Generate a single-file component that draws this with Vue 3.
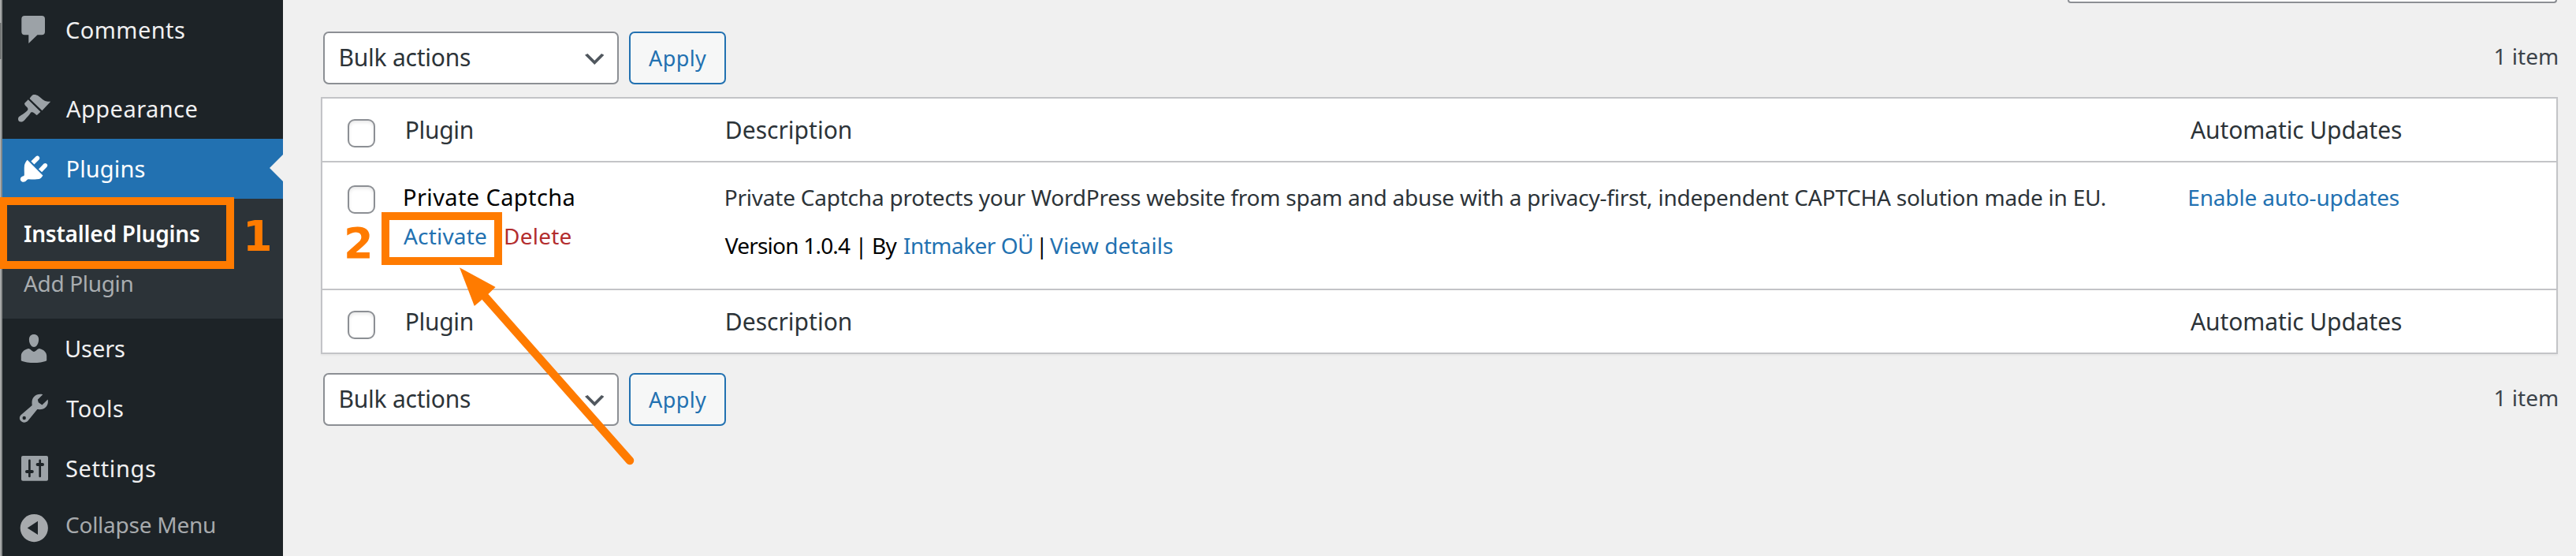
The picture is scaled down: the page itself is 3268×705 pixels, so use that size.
<script setup>
// Spaces a label's letters so that its drawn width equals the given number of pixels.
const ctx = document.createElement('canvas').getContext('2d')
const vFit = {
  mounted(el, { value }) {
    const cs = getComputedStyle(el)
    const text = el.textContent.trim()
    ctx.font = `${cs.fontWeight} ${cs.fontSize} ${cs.fontFamily}`
    const m = ctx.measureText(text)
    const ink = m.actualBoundingBoxLeft + m.actualBoundingBoxRight
    el.style.letterSpacing = `${(value - ink) / (text.length - 1)}px`
    el.style.textIndent = `${m.actualBoundingBoxLeft}px`
    el.style.width = `${value}px`
  },
}
const columns = [
  { label: 'Plugin', width: 84 },
  { label: 'Description', width: 158 },
  { label: 'Automatic Updates', width: 268 },
]
</script>

<template>
  <div class="screen">
    <div class="edge"><div class="edge-thumb"></div></div>
    <nav class="sidebar">
      <a class="item">
        <svg class="icon" viewBox="0 0 42 42"><path d="M9.3 3H31a4 4 0 0 1 4 4v16.3a4 4 0 0 1-4 4h-5.500L14.300 38V27.300h-5a4 4 0 0 1-4-4V7a4 4 0 0 1 4-4z" /></svg>
        <span v-fit="150" class="t">Comments</span>
      </a>
      <a class="item spaced">
        <svg class="icon" viewBox="0 0 42 42">
          <path d="M15.600 8C16.500 6.500 18 4.500 19.700 3.200c1.800-.5 4.300-.1 6 .9 3.600 2.200 5.500 5 9 6.700 2.400 1.100 5 .9 7.500.900L31.400 23.200z" />
          <path d="M13.700 9.300l15.700 15.500-4.500 4.300c-1.200-.4-3.600-3.300-5-3.600-1.200-.3-2.200-.3-2.900.2-.8 1.400-2.700 4-4.300 5.600-1.900 1.900-3.700 4.700-5.700 5.700C4 38.300 1 37.200 1 34c.2-3.600 3-4.100 5.300-5.800 2.200-1.600 5.700-4 6.700-5.500.6-.9.500-2-.1-3-1.200-1.800-3.300-2.600-3.900-5.200.4-1.600 3.600-3.400 4.700-5.200z" />
        </svg>
        <span v-fit="165.500" class="t">Appearance</span>
      </a>
      <a class="item current">
        <svg class="icon" viewBox="0 0 42 42">
          <path d="M12.700 9.700l19.700 19.700c-1.200 2.200-3 4-4.900 4.700-4.500.9-9.500.2-13.300.2-1.800.2-2.100 1-2.800 1.800-1.500 1.700-3.900 2.100-5.800 1.100-2.500-1.700-2.100-5 .2-6.300 1.300-.7 2.800-.7 3-2 .2-4-.4-8 .2-12.500.5-2.500 1.900-4.700 3.700-6.700z" />
          <path d="M17.400 11.500l6.300-6.300a2.850 2.850 0 0 1 4 4l-6.300 6.300zM27 21.500l6.600-6.900a2.850 2.850 0 0 1 4 4L31.100 25.300z" />
        </svg>
        <span v-fit="98" class="t">Plugins</span>
        <span class="notch"></span>
      </a>
      <div class="submenu">
        <a class="sub active"><span v-fit="223" class="t">Installed Plugins</span></a>
        <a class="sub"><span v-fit="138.500" class="t">Add Plugin</span></a>
      </div>
      <a class="item">
        <svg class="icon" viewBox="0 0 42 42">
          <path d="M21 3c3.900 0 6.100 2.600 6.100 6.500 0 4.500-2.500 9.500-6.100 9.500s-6.100-5-6.100-9.500C14.900 5.600 17.100 3 21 3z" />
          <path d="M13.300 21.200c1.900-.4 3.200.8 4.300 1.900 1.200 1 2.200 1.800 3.400 1.800s2.200-.8 3.400-1.800c1.100-1.100 2.400-2.300 4.300-1.900 4.500.8 8.500 4.600 8.500 9v6C33.500 38.400 26 39 21 39S8.500 38.400 4.800 36.200v-6c0-4.400 4-8.200 8.500-9z" />
        </svg>
        <span v-fit="74" class="t">Users</span>
      </a>
      <a class="item">
        <svg class="icon" viewBox="0 0 42 42"><path fill-rule="evenodd" d="M32.300 3.300l-6.500 6.400 1 3.600 4.600 3.200 7.200-6.900c.7 3.500.1 6.700-2.300 9.400-2.500 2.800-6.300 3.500-11 3L13.500 36.500c-2 2.100-5 2.800-7.300 1.500-3.500-1.600-4.400-5.800-2-8.600L18.700 17c-.5-4.700-.2-8.300 2.500-11 2.900-2.800 7-3.800 11.100-2.700zM8.700 30.800a2.200 2.200 0 1 0 0 4.400 2.200 2.200 0 0 0 0-4.400z" /></svg>
        <span v-fit="72" class="t">Tools</span>
      </a>
      <a class="item">
        <svg class="icon" viewBox="0 0 42 42">
          <rect x="5" y="5" width="34" height="31.700" rx="2" />
          <g class="cut">
            <path d="M15.400 10.800v20.200M28.700 10.800v20.200" stroke-width="2.700" />
            <path d="M12 25h6.800M25.600 16h6.400" stroke-width="4" />
          </g>
        </svg>
        <span v-fit="113" class="t">Settings</span>
      </a>
      <a class="item collapse">
        <svg class="icon" viewBox="0 0 42 42"><path fill-rule="evenodd" d="M21.300 3a17.600 17.600 0 1 0 0 35.200 17.600 17.600 0 0 0 0-35.200zM26 11.800v17.300l-13.300-8.700z" /></svg>
        <span v-fit="188" class="t">Collapse Menu</span>
      </a>
    </nav>

    <main class="content">
      <div class="search"></div>
      <template v-for="pos in ['top', 'bottom']" :key="pos">
        <section v-if="pos === 'bottom'" class="table">
          <template v-for="part in ['head', 'body', 'foot']" :key="part">
            <div v-if="part !== 'body'" class="row heading">
              <div class="cell"><span class="box"></span></div>
              <div v-for="c in columns" :key="c.label" class="cell"><span v-fit="c.width" class="t">{{ c.label }}</span></div>
            </div>
            <div v-else class="row plugin">
              <div class="cell"><span class="box"></span></div>
              <div class="cell name">
                <span v-fit="214.500" class="t title">Private Captcha</span>
                <div class="actions">
                  <a v-fit="105" class="t link">Activate</a>
                  <a v-fit="83.500" class="t delete">Delete</a>
                </div>
              </div>
              <div class="cell desc">
                <span v-fit="1750" class="t">Private Captcha protects your WordPress website from spam and abuse with a privacy-first, independent CAPTCHA solution made in EU.</span>
                <div class="meta">
                  <span v-fit="218.700" class="t">Version 1.0.4 | By</span>
                  <a v-fit="162" class="t link">Intmaker OÜ</a>
                  <span class="t bar">|</span>
                  <a v-fit="156" class="t link">View details</a>
                </div>
              </div>
              <div class="cell desc auto"><a v-fit="266.500" class="t link">Enable auto-updates</a></div>
            </div>
          </template>
        </section>
        <div class="tablenav" :class="pos">
          <div class="select">
            <span v-fit="165.500" class="t">Bulk actions</span>
            <svg class="chevron" viewBox="3 6 14 8" preserveAspectRatio="none"><path d="M5 6l5 5 5-5 2 1-7 7-7-7 2-1z" /></svg>
          </div>
          <div class="apply"><span v-fit="73" class="t">Apply</span></div>
          <div class="count"><span v-fit="78.500" class="t">1 item</span></div>
        </div>
      </template>
    </main>

    <div class="callout first"></div>
    <div class="callout second"></div>
    <span class="digit one">1</span>
    <span class="digit two">2</span>
    <svg class="arrow" viewBox="0 0 240 260">
      <path d="M36 38L219 245" class="shaft" />
      <path d="M3 .300L48.600 25 39.300 34 31.400 41 21.800 49z" class="tip" />
    </svg>
  </div>
</template>

<style>
body { margin: 0; background: #f0f0f0; }
</style>

<style scoped>
.screen {
  position: relative;
  display: flex;
  width: 3268px;
  height: 705px;
  overflow: hidden;
  background: #f0f0f0;
  color: #2c3338;
  font-family: "Noto Sans", "Open Sans", sans-serif;
  font-size: 29px;
}
.t { display: inline-block; white-space: nowrap; }
.edge { box-sizing: border-box; width: 3px; height: 705px; background: #888b8b; border-left: 1px solid #b4b6b6; padding-top: 29px; }
.edge-thumb { width: 2px; height: 46px; margin-left: -1px; background: #747777; }

.sidebar { width: 356px; height: 705px; background: #1d2327; color: #f0f0f1; }
.item { position: relative; display: flex; align-items: center; height: 76px; padding-left: 19px; line-height: 76px; }
.item .t { margin-left: 20px; }
.spaced { margin-top: 24px; }
.icon { display: block; width: 42px; height: 42px; overflow: visible; fill: #9ca2a7; }
.current { background: #2271b1; color: #fff; }
.current .icon { fill: #fff; }
.current .t { margin-left: 21.500px; }
.notch { position: absolute; right: 0; top: 20px; border: 17px solid transparent; border-left-width: 0; border-right-color: #f0f0f0; }
.cut { fill: none; stroke: #1d2327; stroke-linecap: round; }
.submenu { box-sizing: border-box; height: 152px; padding: 12px 0 0 27px; background: #2c3338; }
.sub { display: block; height: 63px; line-height: 64px; font-size: 28px; color: #a9adb0; }
.sub.active { color: #fff; font-weight: 600; }
.collapse { color: #a7aaad; font-size: 28px; line-height: 66px; align-items: flex-start; }
.collapse .icon { margin-top: 17px; fill: #a7aaad; }

.content { flex: 1; padding-left: 48px; }
.search { box-sizing: border-box; width: 621px; height: 4px; margin: 0 24px 0 auto; background: #fff; border: 2px solid #8c8f94; border-top: 0; border-radius: 0 0 7px 7px; }
.tablenav { display: flex; height: 67px; margin: 36px 24px 0 3px; }
.tablenav.bottom { margin-top: 24px; }
.select { box-sizing: border-box; display: flex; justify-content: space-between; width: 375px; height: 67px; padding: 0 17px 0 19.500px; background: #fff; border: 2px solid #8c8f94; border-radius: 7px; font-size: 30px; line-height: 62px; }
.chevron { width: 24.500px; height: 14px; margin-top: 25.500px; fill: #50575e; }
.apply { box-sizing: border-box; width: 123px; height: 67px; margin-left: 13px; padding-left: 23px; background: #f6f7f7; border: 2px solid #2271b1; border-radius: 7px; color: #2271b1; font-size: 27px; line-height: 63px; }
.count { margin-left: auto; color: #3c434a; font-size: 28px; line-height: 62px; }

.table { box-sizing: border-box; width: 2838px; height: 326px; margin-top: 16px; background: #fff; border: 2px solid #c3c4c7; box-shadow: 0 2px 2px rgba(0, 0, 0, .04); }
.row { display: grid; grid-template-columns: 102px 407px 1857px 1fr; height: 79px; }
.heading { font-size: 30px; line-height: 79px; }
.heading .cell:nth-child(2) { padding-left: 4.700px; }
.heading .cell:nth-child(3) { padding-left: 3.800px; }
.heading .cell:nth-child(4) { padding-left: 4px; }
.box { box-sizing: border-box; display: block; width: 35px; height: 36px; margin: 26px 0 0 32px; border: 2px solid #8c8f94; border-radius: 9px; background: #fff; box-shadow: inset 0 2px 4px rgba(0, 0, 0, .1); }
.plugin { height: 160px; border-top: 2px solid #c3c4c7; border-bottom: 2px solid #c3c4c7; line-height: 40px; }
.plugin .box { margin-top: 29px; }
.name { padding: 23.500px 0 0 2px; }
.title { color: #000; }
.actions { display: flex; gap: 24px; margin: 9px 0 0 -1px; font-size: 28px; }
.desc { padding: 24px 0 0 2.700px; font-size: 28px; }
.desc > .t { display: block; }
.auto { padding-left: 2.300px; }
.meta { display: flex; margin: 21px 0 0 -1px; color: #000; }
.meta .link { margin-left: 8.600px; }
.meta .bar { width: 2px; margin: 0 1.500px 0 11px; text-indent: -6px; }
.link { color: #2271b1; }
.delete { color: #b32d2e; }

.callout { position: absolute; box-sizing: border-box; border: 10px solid #ff7b00; }
.first { left: -1px; top: 250px; width: 298px; height: 91px; }
.second { left: 484px; top: 269px; width: 153px; height: 67px; }
.digit { position: absolute; color: #ff7b00; font: bold 54px/54px "DejaVu Sans", sans-serif; }
.one { left: 308px; top: 273px; }
.two { left: 436px; top: 282px; }
.arrow { position: absolute; left: 580px; top: 339px; width: 240px; height: 260px; }
.shaft { fill: none; stroke: #ff7b00; stroke-width: 10.500px; stroke-linecap: round; }
.tip { fill: #ff7b00; }
</style>
